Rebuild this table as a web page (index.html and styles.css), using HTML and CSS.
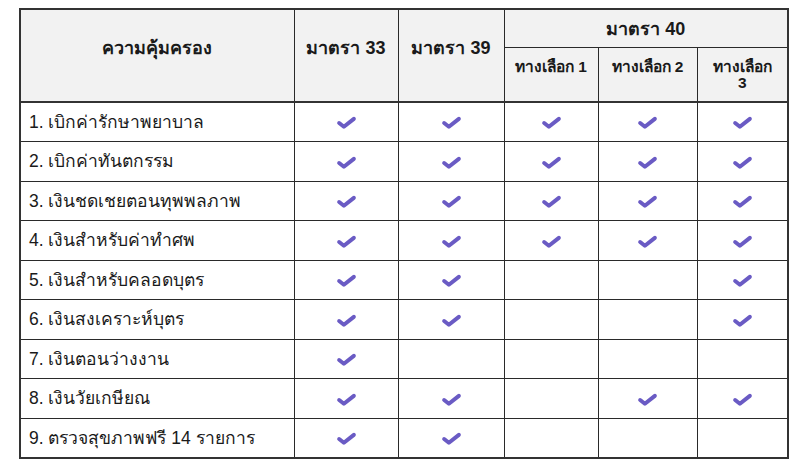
FILE: index.html
```html
<!DOCTYPE html>
<html lang="th">
<head>
<meta charset="utf-8">
<link rel="stylesheet" href="styles.css">
</head>
<body>
<table class="cov">
  <colgroup>
    <col class="c1"><col class="c2"><col class="c3"><col class="c4"><col class="c5"><col class="c6">
  </colgroup>
  <thead>
    <tr class="h1">
      <th rowspan="2" class="top">ความคุ้มครอง</th>
      <th rowspan="2" class="top">มาตรา 33</th>
      <th rowspan="2" class="top">มาตรา 39</th>
      <th colspan="3">มาตรา 40</th>
    </tr>
    <tr class="h2">
      <th class="sub">ทางเลือก 1</th>
      <th class="sub">ทางเลือก 2</th>
      <th class="sub narrow">ทางเลือก 3</th>
    </tr>
  </thead>
  <tbody>
    <tr><td>1. เบิกค่ารักษาพยาบาล</td><td class="k"><svg class="chk" viewBox="0 0 20 14"><path d="M3 7.5 L7.5 11 L17 3.5"/></svg></td><td class="k"><svg class="chk" viewBox="0 0 20 14"><path d="M3 7.5 L7.5 11 L17 3.5"/></svg></td><td class="k"><svg class="chk" viewBox="0 0 20 14"><path d="M3 7.5 L7.5 11 L17 3.5"/></svg></td><td class="k"><svg class="chk" viewBox="0 0 20 14"><path d="M3 7.5 L7.5 11 L17 3.5"/></svg></td><td class="k"><svg class="chk" viewBox="0 0 20 14"><path d="M3 7.5 L7.5 11 L17 3.5"/></svg></td></tr>
    <tr><td>2. เบิกค่าทันตกรรม</td><td class="k"><svg class="chk" viewBox="0 0 20 14"><path d="M3 7.5 L7.5 11 L17 3.5"/></svg></td><td class="k"><svg class="chk" viewBox="0 0 20 14"><path d="M3 7.5 L7.5 11 L17 3.5"/></svg></td><td class="k"><svg class="chk" viewBox="0 0 20 14"><path d="M3 7.5 L7.5 11 L17 3.5"/></svg></td><td class="k"><svg class="chk" viewBox="0 0 20 14"><path d="M3 7.5 L7.5 11 L17 3.5"/></svg></td><td class="k"><svg class="chk" viewBox="0 0 20 14"><path d="M3 7.5 L7.5 11 L17 3.5"/></svg></td></tr>
    <tr><td>3. เงินชดเชยตอนทุพพลภาพ</td><td class="k"><svg class="chk" viewBox="0 0 20 14"><path d="M3 7.5 L7.5 11 L17 3.5"/></svg></td><td class="k"><svg class="chk" viewBox="0 0 20 14"><path d="M3 7.5 L7.5 11 L17 3.5"/></svg></td><td class="k"><svg class="chk" viewBox="0 0 20 14"><path d="M3 7.5 L7.5 11 L17 3.5"/></svg></td><td class="k"><svg class="chk" viewBox="0 0 20 14"><path d="M3 7.5 L7.5 11 L17 3.5"/></svg></td><td class="k"><svg class="chk" viewBox="0 0 20 14"><path d="M3 7.5 L7.5 11 L17 3.5"/></svg></td></tr>
    <tr><td>4. เงินสำหรับค่าทำศพ</td><td class="k"><svg class="chk" viewBox="0 0 20 14"><path d="M3 7.5 L7.5 11 L17 3.5"/></svg></td><td class="k"><svg class="chk" viewBox="0 0 20 14"><path d="M3 7.5 L7.5 11 L17 3.5"/></svg></td><td class="k"><svg class="chk" viewBox="0 0 20 14"><path d="M3 7.5 L7.5 11 L17 3.5"/></svg></td><td class="k"><svg class="chk" viewBox="0 0 20 14"><path d="M3 7.5 L7.5 11 L17 3.5"/></svg></td><td class="k"><svg class="chk" viewBox="0 0 20 14"><path d="M3 7.5 L7.5 11 L17 3.5"/></svg></td></tr>
    <tr><td>5. เงินสำหรับคลอดบุตร</td><td class="k"><svg class="chk" viewBox="0 0 20 14"><path d="M3 7.5 L7.5 11 L17 3.5"/></svg></td><td class="k"><svg class="chk" viewBox="0 0 20 14"><path d="M3 7.5 L7.5 11 L17 3.5"/></svg></td><td class="k"></td><td class="k"></td><td class="k"><svg class="chk" viewBox="0 0 20 14"><path d="M3 7.5 L7.5 11 L17 3.5"/></svg></td></tr>
    <tr><td>6. เงินสงเคราะห์บุตร</td><td class="k"><svg class="chk" viewBox="0 0 20 14"><path d="M3 7.5 L7.5 11 L17 3.5"/></svg></td><td class="k"><svg class="chk" viewBox="0 0 20 14"><path d="M3 7.5 L7.5 11 L17 3.5"/></svg></td><td class="k"></td><td class="k"></td><td class="k"><svg class="chk" viewBox="0 0 20 14"><path d="M3 7.5 L7.5 11 L17 3.5"/></svg></td></tr>
    <tr><td>7. เงินตอนว่างงาน</td><td class="k"><svg class="chk" viewBox="0 0 20 14"><path d="M3 7.5 L7.5 11 L17 3.5"/></svg></td><td class="k"></td><td class="k"></td><td class="k"></td><td class="k"></td></tr>
    <tr><td>8. เงินวัยเกษียณ</td><td class="k"><svg class="chk" viewBox="0 0 20 14"><path d="M3 7.5 L7.5 11 L17 3.5"/></svg></td><td class="k"><svg class="chk" viewBox="0 0 20 14"><path d="M3 7.5 L7.5 11 L17 3.5"/></svg></td><td class="k"></td><td class="k"><svg class="chk" viewBox="0 0 20 14"><path d="M3 7.5 L7.5 11 L17 3.5"/></svg></td><td class="k"><svg class="chk" viewBox="0 0 20 14"><path d="M3 7.5 L7.5 11 L17 3.5"/></svg></td></tr>
    <tr><td>9. ตรวจสุขภาพฟรี 14 รายการ</td><td class="k"><svg class="chk" viewBox="0 0 20 14"><path d="M3 7.5 L7.5 11 L17 3.5"/></svg></td><td class="k"><svg class="chk" viewBox="0 0 20 14"><path d="M3 7.5 L7.5 11 L17 3.5"/></svg></td><td class="k"></td><td class="k"></td><td class="k"></td></tr>
  </tbody>
</table>
</body>
</html>
```
FILE: styles.css
```css
html, body {
  margin: 0;
  padding: 0;
  background: #ffffff;
}
body {
  padding: 8px 0 0 19px;
  font-family: "Liberation Sans", Arial, "Noto Sans", sans-serif;
  color: #1a1a1a;
}
.cov {
  border-collapse: collapse;
  table-layout: fixed;
  width: 768px;
  border: 2px solid #333;
  font-size: 16px;
}
.c1 { width: 274px; }
.c2 { width: 104px; }
.c3 { width: 106px; }
.c4 { width: 94px; }
.c5 { width: 99px; }
.c6 { width: 91px; }
th, td {
  border: 1px solid #2a2a2a;
  padding: 0 8px;
}
thead th {
  background: #f2f2f2;
  font-weight: bold;
  text-align: center;
  color: #1a1a1a;
  font-size: 18px;
}
thead {
  border-bottom: 2px solid #333;
}
.h1 { height: 38px; }
.h2 { height: 55px; }
.top {
  vertical-align: top;
  padding: 28px 4px 0;
  line-height: 20px;
}
.sub {
  font-size: 15.5px;
  vertical-align: top;
  padding: 11px 2px 0;
  line-height: 16px;
}
.sub.narrow {
  padding: 11px 9px 0;
}
tbody tr { height: 39.5px; }
td {
  padding-left: 8px;
  font-size: 17.5px;
}
td.k {
  text-align: center;
  padding: 0;
}
.chk {
  width: 21px;
  height: 15px;
  display: inline-block;
  vertical-align: middle;
}
.chk path {
  fill: none;
  stroke: #6a5bc4;
  stroke-width: 3.8;
  stroke-linecap: round;
  stroke-linejoin: round;
}
```
